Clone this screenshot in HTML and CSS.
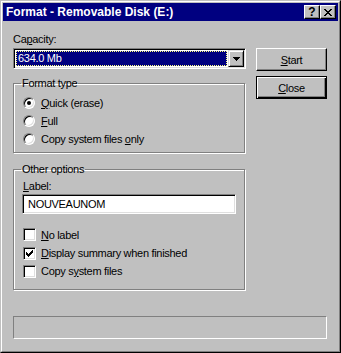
FILE: index.html
```html
<!DOCTYPE html>
<html lang="en">
<head>
    <meta charset="UTF-8">
    <meta name="viewport" content="width=device-width, initial-scale=1.0">
    <title>Format - Removable Disk (E:)</title>
    <link rel="stylesheet" href="styles.css">
</head>
<body>
    <div class="window">
        <div class="frame">
            <div class="titlebar">
                <span class="title">Format - Removable Disk (E:)</span>
                <div class="title-buttons">
                    <div class="tbtn help">?</div>
                    <div class="tbtn close-x">
                        <svg width="8" height="7" viewBox="0 0 8 7" shape-rendering="crispEdges"><path d="M0 0h2v1h-2zM6 0h2v1h-2zM1 1h2v1h-2zM5 1h2v1h-2zM2 2h4v1h-4zM3 3h2v1h-2zM2 4h4v1h-4zM1 5h2v1h-2zM5 5h2v1h-2zM0 6h2v1h-2zM6 6h2v1h-2z" fill="#000"/></svg>
                    </div>
                </div>
            </div>

            <div class="client">
                <div class="main">
                    <div class="left">
                        <div class="field-label">Ca<u>p</u>acity:</div>
                        <div class="combo">
                            <div class="combo-value">634.0 Mb</div>
                            <div class="combo-btn">
                                <svg width="7" height="4" viewBox="0 0 7 4" shape-rendering="crispEdges"><path d="M0 0h7v1h-1v1h-1v1h-1v1h-1v-1h-1v-1h-1v-1h-1z" fill="#000"/></svg>
                            </div>
                        </div>

                        <fieldset class="group format-type">
                            <legend>Format type</legend>
                            <div class="option"><span class="radio checked"></span><span><u>Q</u>uick (erase)</span></div>
                            <div class="option"><span class="radio"></span><span><u>F</u>ull</span></div>
                            <div class="option"><span class="radio"></span><span>Copy system files <u>o</u>nly</span></div>
                        </fieldset>

                        <fieldset class="group other-options">
                            <legend>Other options</legend>
                            <div class="field-label"><u>L</u>abel:</div>
                            <div class="textbox">NOUVEAUNOM</div>
                            <div class="checks">
                                <div class="option check-row"><span class="checkbox"></span><span><u>N</u>o label</span></div>
                                <div class="option"><span class="checkbox">
                                    <svg width="7" height="7" viewBox="0 0 7 7" shape-rendering="crispEdges"><path d="M6 0h1v1h-1zM5 1h2v1h-2zM0 2h1v1h-1zM4 2h3v1h-3zM0 3h2v1h-2zM3 3h3v1h-3zM0 4h5v1h-5zM1 5h3v1h-3zM2 6h1v1h-1z" fill="#000"/></svg>
                                </span><span><u>D</u>isplay summary when finished</span></div>
                                <div class="option"><span class="checkbox"></span><span>Copy s<u>y</u>stem files</span></div>
                            </div>
                        </fieldset>
                    </div>

                    <div class="right">
                        <div class="btn"><u>S</u>tart</div>
                        <div class="btn default"><u>C</u>lose</div>
                    </div>
                </div>

                <div class="status"></div>
            </div>
        </div>
    </div>
</body>
</html>
```

FILE: styles.css
```css
body { margin: 0; background: #c0c0c0; font-family: "Liberation Sans", Arial, sans-serif; font-size: 11px; letter-spacing: -0.3px; color: #000; }
u { text-decoration: underline; text-underline-offset: 1px; }

.window { width: 341px; height: 353px; box-sizing: border-box; border: 1px solid; border-color: #c0c0c0 #000 #000 #c0c0c0; background: #c0c0c0; }
.frame { height: 100%; box-sizing: border-box; border: 1px solid; border-color: #fff #808080 #808080 #fff; padding: 1px; }

.titlebar { height: 18px; background: #000080; display: flex; justify-content: space-between; }
.title { color: #fff; font-weight: bold; font-size: 12px; line-height: 18px; padding-left: 3px; letter-spacing: 0; }
.title-buttons { display: flex; padding: 2px 2px 0 0; }
.tbtn { width: 16px; height: 14px; box-sizing: border-box; border: 1px solid; border-color: #fff #000 #000 #fff; box-shadow: inset -1px -1px #808080; background: #c0c0c0; display: flex; align-items: center; justify-content: center; }
.help { font-weight: bold; font-size: 12px; line-height: 12px; letter-spacing: 0; }

.client { padding: 12px 11px 0 10px; }
.main { display: flex; gap: 10px; }
.left { width: 233px; }
.right { width: 71px; padding-top: 15px; display: flex; flex-direction: column; gap: 5px; }

.field-label { line-height: 13px; height: 13px; }

.combo { margin-top: 2px; height: 21px; box-sizing: border-box; border: 1px solid; border-color: #808080 #fff #fff #808080; box-shadow: inset 1px 1px #000, inset -1px -1px #dfdfdf; background: #fff; padding: 1px; display: flex; }
.combo-value { flex: 1; margin: 1px; background: #000080; color: #fff; border: 1px dotted #ffff7f; line-height: 13px; padding-left: 1px; }
.combo-btn { width: 16px; box-sizing: border-box; border: 1px solid; border-color: #dfdfdf #000 #000 #dfdfdf; box-shadow: inset 1px 1px #fff, inset -1px -1px #808080; background: #c0c0c0; display: flex; align-items: center; justify-content: center; }

.group { margin: 0 1px 0 0; padding: 4px 0 4px 9px; border: 1px solid #808080; box-shadow: 1px 1px 0 #fff, inset 1px 1px 0 #fff; min-width: 0; }
.group legend { padding: 0 1px; margin-left: -2px; line-height: 13px; }
.format-type { margin-top: 8px; }
.other-options { margin-top: 10px; padding-bottom: 9px; }

.option { display: flex; align-items: center; height: 18px; gap: 6px; }
.check-row { height: 19px; }
.checks .option { gap: 5px; }
.checks { margin-top: 11px; }

.radio { width: 12px; height: 12px; box-sizing: border-box; border-radius: 50%; border: 1px solid; border-color: #808080 #fff #fff #808080; box-shadow: inset 1px 1px #000, inset -1px -1px #dfdfdf; background: #fff; position: relative; }
.radio.checked::after { content: ""; position: absolute; left: 3px; top: 3px; width: 4px; height: 4px; border-radius: 50%; background: #000; }

.checkbox { width: 13px; height: 13px; box-sizing: border-box; border: 1px solid; border-color: #808080 #fff #fff #808080; box-shadow: inset 1px 1px #000, inset -1px -1px #dfdfdf; background: #fff; display: flex; align-items: center; justify-content: center; }

.textbox { margin: 1px 0 0 -1px; width: 214px; height: 20px; box-sizing: border-box; border: 1px solid; border-color: #808080 #fff #fff #808080; box-shadow: inset 1px 1px #000, inset -1px -1px #dfdfdf; background: #fff; padding-left: 5px; line-height: 18px; }

.btn { height: 23px; box-sizing: border-box; border: 1px solid; border-color: #fff #000 #000 #fff; box-shadow: inset -1px -1px #808080; display: flex; align-items: center; justify-content: center; }
.btn.default { border-color: #000; box-shadow: inset 1px 1px #fff, inset -1px -1px #000, inset -2px -2px #808080; }

.status { margin-top: 26px; width: 314px; height: 23px; box-sizing: border-box; border: 1px solid; border-color: #808080 #fff #fff #808080; }
```
